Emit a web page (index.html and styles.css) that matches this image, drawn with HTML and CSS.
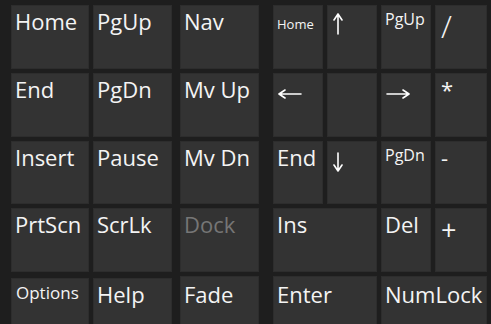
FILE: index.html
```html
<!DOCTYPE html>
<html>
<head>
<meta charset="utf-8">
<link rel="stylesheet" href="styles.css">
</head>
<body>
<div class="osk">
  <div class="sec sec-a">
    <div class="key">Home</div>
    <div class="key">PgUp</div>
    <div class="key">End</div>
    <div class="key">PgDn</div>
    <div class="key">Insert</div>
    <div class="key">Pause</div>
    <div class="key">PrtScn</div>
    <div class="key">ScrLk</div>
    <div class="key low opt">Options</div>
    <div class="key low">Help</div>
  </div>
  <div class="sec sec-c">
    <div class="key">Nav</div>
    <div class="key">Mv Up</div>
    <div class="key">Mv Dn</div>
    <div class="key dim">Dock</div>
    <div class="key last">Fade</div>
  </div>
  <div class="sec sec-n">
    <div class="key tiny">Home</div>
    <div class="key"><svg class="arr arr-up" width="12" height="22" viewBox="0 0 12 22"><path d="M6 1 V21 M6 1 L2 7 M6 1 L10 7" fill="none" stroke="#fff" stroke-width="1.6" stroke-linecap="round" stroke-linejoin="round"/></svg></div>
    <div class="key small">PgUp</div>
    <div class="key wide sym slash">/</div>

    <div class="key"><svg class="arr arr-left" width="24" height="12" viewBox="0 0 24 12"><path d="M1 6 H23 M1 6 L7 2 M1 6 L7 10" fill="none" stroke="#fff" stroke-width="1.6" stroke-linecap="round" stroke-linejoin="round"/></svg></div>
    <div class="key"></div>
    <div class="key"><svg class="arr arr-right" width="24" height="12" viewBox="0 0 24 12"><path d="M1 6 H23 M23 6 L17 2 M23 6 L17 10" fill="none" stroke="#fff" stroke-width="1.6" stroke-linecap="round" stroke-linejoin="round"/></svg></div>
    <div class="key wide sym">*</div>

    <div class="key">End</div>
    <div class="key"><svg class="arr arr-down" width="12" height="20" viewBox="0 0 12 20"><path d="M6 1 V19 M6 19 L2 13 M6 19 L10 13" fill="none" stroke="#fff" stroke-width="1.6" stroke-linecap="round" stroke-linejoin="round"/></svg></div>
    <div class="key small">PgDn</div>
    <div class="key wide sym">-</div>

    <div class="key span2">Ins</div>
    <div class="key">Del</div>
    <div class="key wide sym plus">+</div>

    <div class="key span2 last">Enter</div>
    <div class="key span2 last">NumLock</div>
  </div>
</div>
</body>
</html>
```

FILE: styles.css
```css
html, body {
  margin: 0;
  padding: 0;
  width: 491px;
  height: 324px;
  overflow: hidden;
  background: #1e1e1e;
}

.osk {
  display: flex;
  padding: 5px 0 0 11px;
  font-family: "Open Sans", "Noto Sans", sans-serif;
  color: #f4f4f4;
}

.sec {
  display: grid;
  grid-template-rows: 64px 64px 63px 64px 64px;
  gap: 4px;
}

.sec-a {
  grid-template-columns: 78px 79px;
}

.sec-c {
  margin-left: 8px;
  grid-template-columns: 79px;
}

.sec-n {
  margin-left: 14px;
  grid-template-columns: 50px 50px 50px 52px;
}

.key {
  box-sizing: border-box;
  background: #333333;
  border: 1px solid #2d2d2d;
  font-size: 22px;
  line-height: normal;
  padding: 0 0 0 3px;
  white-space: nowrap;
}

.span2 {
  grid-column: span 2;
}

.low {
  margin-top: 2px;
}

.last {
  padding-top: 2px;
}

.opt {
  font-size: 17px;
  padding-top: 2px;
  padding-left: 4px;
}

.tiny {
  font-size: 13px;
  padding-top: 9px;
}

.small {
  font-size: 16px;
  padding-top: 2px;
}

.dim {
  color: #767676;
}

.sym {
  padding-left: 5px;
}

.slash {
  font-size: 32px;
  font-weight: 300;
  line-height: 40px;
  margin-top: 0;
}

.plus {
  font-size: 27px;
  padding-top: 2px;
}

.arr {
  display: block;
}

.arr-up {
  margin: 7px 0 0 1px;
}

.arr-down {
  margin: 10px 0 0 1px;
}

.arr-left {
  margin: 14px 0 0 1px;
}

.arr-right {
  margin: 14px 0 0 1px;
}
```
